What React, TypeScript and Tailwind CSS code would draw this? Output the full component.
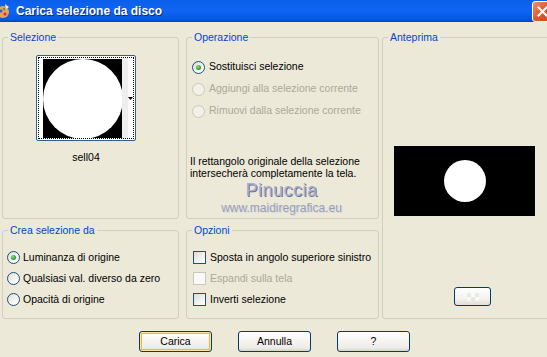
import type { ReactNode } from 'react';

function Radio({ checked = false, disabled = false }: { checked?: boolean; disabled?: boolean }) {
  return (
    <span
      className={
        disabled
          ? 'flex h-[13px] w-[13px] shrink-0 items-center justify-center rounded-full border border-[#CAC8BB] bg-[#F3F1E7]'
          : 'flex h-[13px] w-[13px] shrink-0 items-center justify-center rounded-full border border-[#1C5180] bg-[linear-gradient(135deg,#DCDCD7_0%,#F6F6F3_60%,#FFFFFF_100%)]'
      }
    >
      {checked && <span className="h-[5px] w-[5px] rounded-full bg-[radial-gradient(circle_at_40%_35%,#8FDB8F_0%,#2FAA2F_55%,#1C8E1C_100%)]" />}
    </span>
  );
}

function Checkbox({ disabled = false }: { disabled?: boolean }) {
  return (
    <span
      className={
        disabled
          ? 'h-[13px] w-[13px] shrink-0 border border-[#CAC8BB] bg-[#FAF9F5]'
          : 'h-[13px] w-[13px] shrink-0 border border-[#1C5180] bg-[linear-gradient(135deg,#DCDCD7_0%,#F2F2EE_60%,#FFFFFF_100%)]'
      }
    />
  );
}

function Group({ title, className, children }: { title: string; className: string; children?: ReactNode }) {
  return (
    <fieldset className={`rounded-[3px] border border-[#D0D0BF] ${className}`}>
      <legend className="ml-[5px] px-[2px] leading-[13px] text-[#0046D5]">{title}</legend>
      {children}
    </fieldset>
  );
}

function XpButton({ label, isDefault = false }: { label: string; isDefault?: boolean }) {
  return (
    <div
      className={
        'flex h-[21px] w-[73px] items-center justify-center rounded-[3px] border border-[#003C74] bg-[linear-gradient(180deg,#FFFFFF_0%,#F5F4EF_50%,#ECEBE4_85%,#D8D2C6_100%)] ' +
        (isDefault ? 'shadow-[inset_0_0_0_1px_#FFE7A3,inset_0_0_0_2px_#F5B33A]' : '')
      }
    >
      {label}
    </div>
  );
}

export default function App() {
  return (
    <div className="flex h-[357px] w-[547px] flex-col overflow-hidden bg-[#ECE9D8] font-['Liberation_Sans',Arial,sans-serif] text-[10.5px] text-black">
      {/* barra del titolo */}
      <div className="flex h-[22px] shrink-0 items-center bg-[linear-gradient(180deg,#0A5EEA_0%,#0F66F2_45%,#0658E6_85%,#0042C4_100%)]">
        <svg width="14" height="16" viewBox="0 0 14 16" className="-ml-[4px] shrink-0">
          <ellipse cx="7" cy="9" rx="6" ry="6" fill="#E8A05A" />
          <circle cx="5" cy="8" r="1.5" fill="#3060D0" />
          <circle cx="9" cy="11" r="1.5" fill="#D03030" />
          <circle cx="8" cy="6" r="1.2" fill="#40A040" />
          <path d="M9 1 L13 4 L10 6 Z" fill="#F0F0F0" />
        </svg>
        <span className="ml-[6px] text-[12px] font-bold text-white [text-shadow:1px_1px_0_#0A2A8A]">Carica selezione da disco</span>
        <div className="-mr-[6px] ml-auto flex h-[21px] w-[21px] shrink-0 items-center justify-center rounded-[3px] border border-white bg-[linear-gradient(135deg,#F09070_0%,#E05A2E_50%,#C8401C_100%)]">
          <svg width="11" height="11" viewBox="0 0 11 11">
            <path d="M1.5 1.5 L9.5 9.5 M9.5 1.5 L1.5 9.5" stroke="white" strokeWidth="2" strokeLinecap="square" />
          </svg>
        </div>
      </div>

      <div className="flex flex-col px-[2px] pt-[9px]">
        <div className="flex">
          {/* colonna sinistra */}
          <div className="flex w-[177px] shrink-0 flex-col gap-[5px]">
            <Group title="Selezione" className="h-[188px]">
              <div className="ml-[33px] mt-[11px] flex w-[100px] flex-col items-center">
                <div className="flex h-[86px] w-[100px] rounded-[2px] border border-[#2E5E93] bg-white p-[1px]">
                  <div className="flex h-full w-full border border-dotted border-black">
                    <div className="w-[4px] bg-white" />
                    <div className="my-[1px] flex h-[79px] w-[79px] items-center justify-center overflow-hidden bg-black">
                      <div className="h-[80px] w-[80px] shrink-0 rounded-full bg-white blur-[0.4px]" />
                    </div>
                    <div className="w-[6px] bg-[#EEEEEE]" />
                    <div className="flex flex-1 items-center justify-center bg-white">
                      <svg width="5" height="3" viewBox="0 0 5 3">
                        <path d="M0 0 H5 L2.5 3 Z" fill="black" />
                      </svg>
                    </div>
                  </div>
                </div>
                <span className="mt-[10px] leading-[12px]">sell04</span>
              </div>
            </Group>
            <Group title="Crea selezione da" className="h-[95px]">
              <div className="mt-[10px] flex flex-col pl-[4px]">
                <label className="flex h-[21px] items-center gap-[3px]">
                  <Radio checked />
                  <span>Luminanza di origine</span>
                </label>
                <label className="flex h-[21px] items-center gap-[3px]">
                  <Radio />
                  <span>Qualsiasi val. diverso da zero</span>
                </label>
                <label className="flex h-[21px] items-center gap-[3px]">
                  <Radio />
                  <span>Opacità di origine</span>
                </label>
              </div>
            </Group>
          </div>

          {/* colonna centrale */}
          <div className="ml-[7px] flex w-[193px] shrink-0 flex-col gap-[5px]">
            <Group title="Operazione" className="h-[188px]">
              <div className="mt-[12px] flex flex-col pl-[5px]">
                <label className="flex h-[22px] items-center gap-[4px]">
                  <Radio checked />
                  <span>Sostituisci selezione</span>
                </label>
                <label className="flex h-[22px] items-center gap-[4px] text-[#ACA899]">
                  <Radio disabled />
                  <span>Aggiungi alla selezione corrente</span>
                </label>
                <label className="flex h-[22px] items-center gap-[4px] text-[#ACA899]">
                  <Radio disabled />
                  <span>Rimuovi dalla selezione corrente</span>
                </label>
              </div>
              <p className="mt-[33px] pl-[3px] leading-[12px]">
                Il rettangolo originale della selezione
                <br />
                intersecherà completamente la tela.
              </p>
              <div className="mt-[1px] flex flex-col items-center pr-[2px]">
                <span className="text-[18px] leading-[20px] tracking-[0.5px] text-[#AAAECE] [text-shadow:1px_1px_0_#6E7494]">Pinuccia</span>
                <span className="mt-[1px] text-[12px] leading-[14px] text-[#9A9EB4] [text-shadow:1px_1px_0_#D8D8E4]">www.maidiregrafica.eu</span>
              </div>
            </Group>
            <Group title="Opzioni" className="h-[95px]">
              <div className="mt-[10px] flex flex-col pl-[6px]">
                <label className="flex h-[21px] items-center gap-[4px]">
                  <Checkbox />
                  <span>Sposta in angolo superiore sinistro</span>
                </label>
                <label className="flex h-[21px] items-center gap-[4px] text-[#ACA899]">
                  <Checkbox disabled />
                  <span>Espandi sulla tela</span>
                </label>
                <label className="flex h-[21px] items-center gap-[4px]">
                  <Checkbox />
                  <span>Inverti selezione</span>
                </label>
              </div>
            </Group>
          </div>

          {/* anteprima */}
          <Group title="Anteprima" className="ml-[3px] h-[288px] w-[172px] shrink-0">
            <div className="ml-[11px] mt-[102px] flex h-[70px] w-[141px] items-center justify-center bg-black">
              <div className="h-[42px] w-[42px] rounded-full bg-white" />
            </div>
            <div className="ml-[71px] mt-[71px] flex h-[19px] w-[37px] items-center justify-center rounded-[3px] border border-[#003C74] bg-[linear-gradient(180deg,#FFFFFF_0%,#F4F3EE_60%,#E2DFD4_100%)]">
              <div className="grid grid-cols-3 opacity-60">
                <span className="h-[4px] w-[4px] bg-[#E0E0E0]" />
                <span className="h-[4px] w-[4px] bg-white" />
                <span className="h-[4px] w-[4px] bg-[#E0E0E0]" />
                <span className="h-[4px] w-[4px] bg-white" />
                <span className="h-[4px] w-[4px] bg-[#E0E0E0]" />
                <span className="h-[4px] w-[4px] bg-white" />
              </div>
            </div>
          </Group>
        </div>

        {/* pulsanti */}
        <div className="ml-[137px] mt-[12px] flex gap-[26px]">
          <XpButton label="Carica" isDefault />
          <XpButton label="Annulla" />
          <XpButton label="?" />
        </div>
      </div>
    </div>
  );
}
